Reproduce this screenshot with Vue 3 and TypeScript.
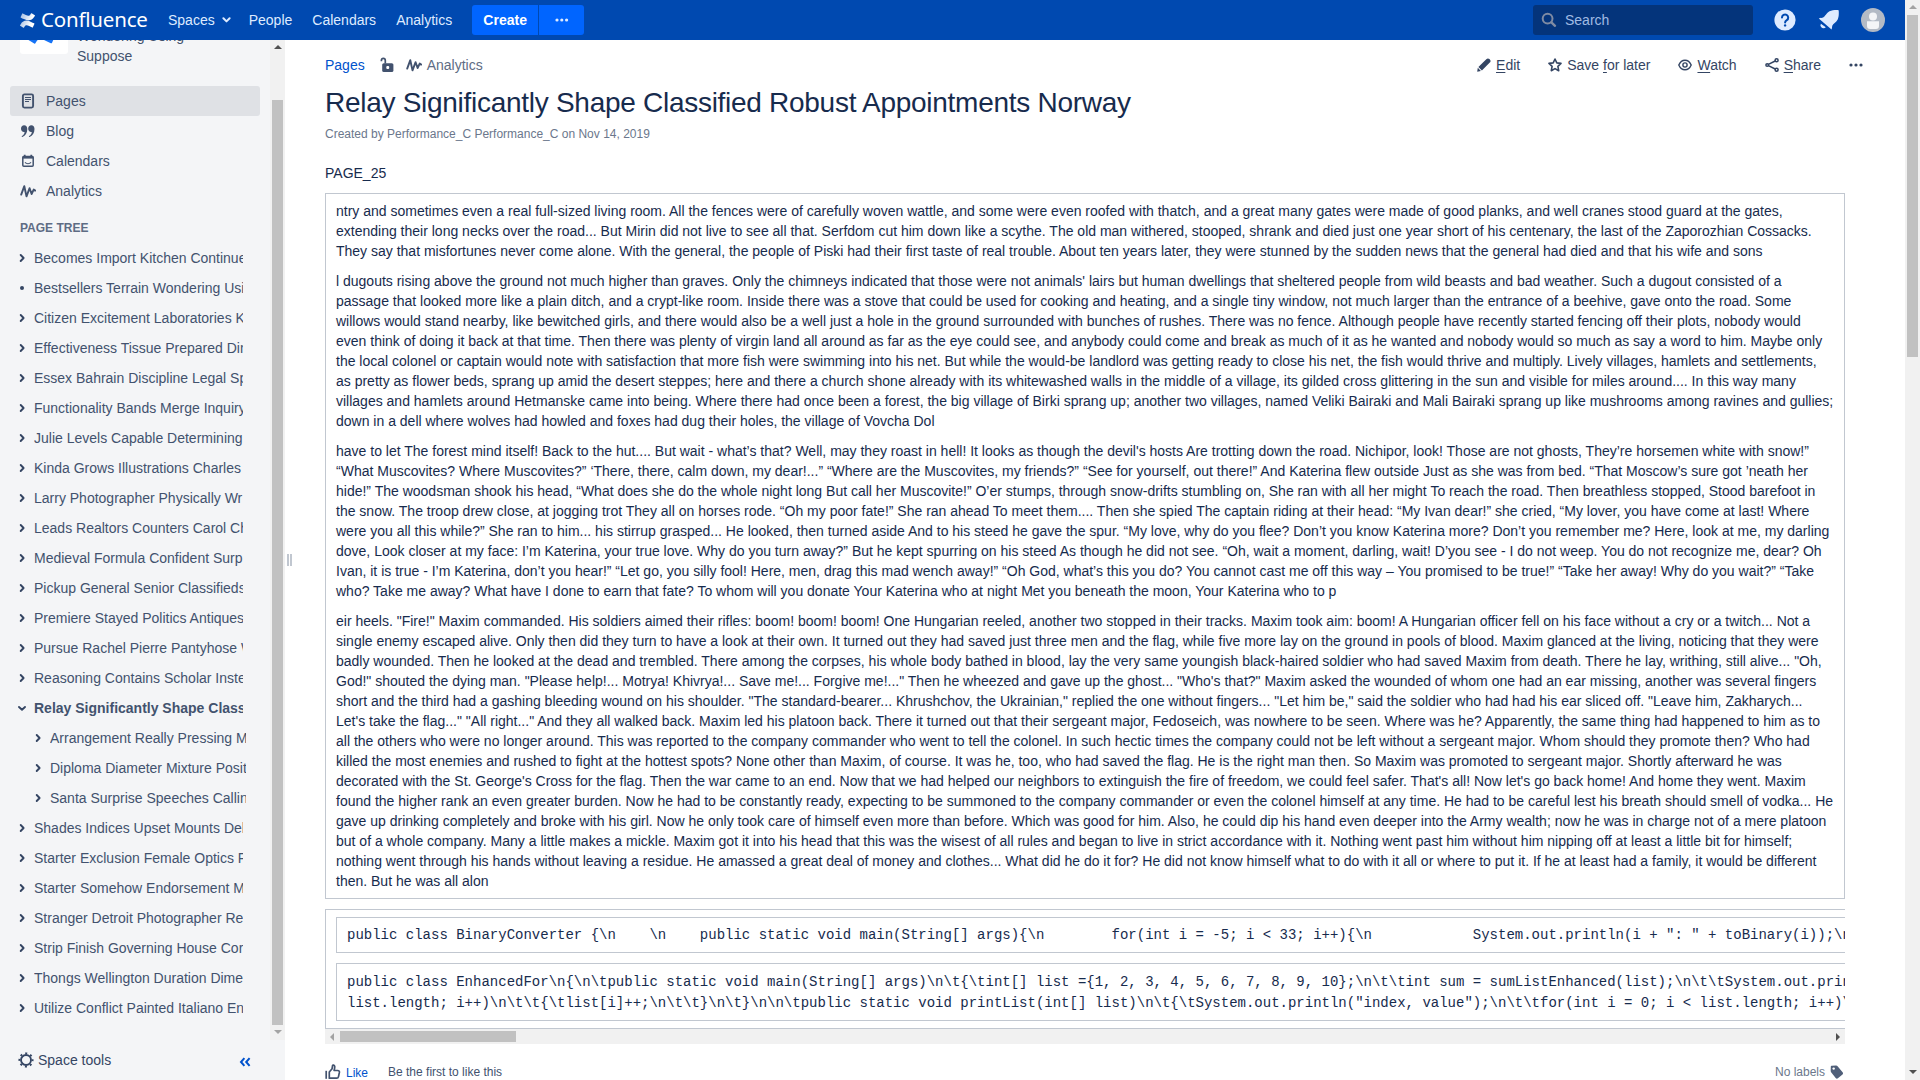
<script setup lang="ts">
interface TreeItem {
  title: string
  kind?: 'leaf' | 'open'
  child?: boolean
}

const mark =
  'M.87 18.257c-.248.382-.53.875-.763 1.245a.764.764 0 0 0 .255 1.04l4.965 3.054a.764.764 0 0 0 1.058-.26c.199-.332.454-.763.733-1.221 1.967-3.247 3.945-2.853 7.508-1.146l4.957 2.337a.764.764 0 0 0 1.028-.382l2.364-5.346a.764.764 0 0 0-.382-1 599.851 599.851 0 0 1-4.965-2.361C10.911 10.97 5.224 11.185.87 18.257z'
const markTop =
  'M23.131 5.743c.249-.405.531-.875.764-1.25a.764.764 0 0 0-.256-1.034L18.675.404a.764.764 0 0 0-1.058.26c-.195.335-.451.763-.734 1.225-1.966 3.246-3.945 2.85-7.508 1.146L4.437.694a.764.764 0 0 0-1.027.382L1.046 6.422a.764.764 0 0 0 .382 1c1.039.49 3.105 1.467 4.965 2.361 6.698 3.246 12.392 3.029 16.738-4.04z'
const pulse = 'M1.200 11.600 4.300 3.200 6.500 13.400 9.600 5.200 11.600 11 13.700 6.600 15.200 7.600'

const tree: TreeItem[] = [
  { title: 'Becomes Import Kitchen Continued' },
  { title: 'Bestsellers Terrain Wondering Using', kind: 'leaf' },
  { title: 'Citizen Excitement Laboratories Kinda' },
  { title: 'Effectiveness Tissue Prepared Dining' },
  { title: 'Essex Bahrain Discipline Legal Spice' },
  { title: 'Functionality Bands Merge Inquiry' },
  { title: 'Julie Levels Capable Determining' },
  { title: 'Kinda Grows Illustrations Charles' },
  { title: 'Larry Photographer Physically Wr' },
  { title: 'Leads Realtors Counters Carol Chad' },
  { title: 'Medieval Formula Confident Surp' },
  { title: 'Pickup General Senior Classifieds' },
  { title: 'Premiere Stayed Politics Antiques' },
  { title: 'Pursue Rachel Pierre Pantyhose Water' },
  { title: 'Reasoning Contains Scholar Instead' },
  { title: 'Relay Significantly Shape Classified', kind: 'open' },
  { title: 'Arrangement Really Pressing Mini', child: true },
  { title: 'Diploma Diameter Mixture Posit', child: true },
  { title: 'Santa Surprise Speeches Calling', child: true },
  { title: 'Shades Indices Upset Mounts Delay' },
  { title: 'Starter Exclusion Female Optics Fit' },
  { title: 'Starter Somehow Endorsement Mini' },
  { title: 'Stranger Detroit Photographer Re' },
  { title: 'Strip Finish Governing House Corp' },
  { title: 'Thongs Wellington Duration Dimens' },
  { title: 'Utilize Conflict Painted Italiano Ent' },
]

const paragraphs: string[] = [
  `ntry and sometimes even a real full-sized living room. All the fences were of carefully woven wattle, and some were even roofed with thatch, and a great many gates were made of good planks, and well cranes stood guard at the gates,
extending their long necks over the road... But Mirin did not live to see all that. Serfdom cut him down like a scythe. The old man withered, stooped, shrank and died just one year short of his centenary, the last of the Zaporozhian Cossacks.
They say that misfortunes never come alone. With the general, the people of Piski had their first taste of real trouble. About ten years later, they were stunned by the sudden news that the general had died and that his wife and sons`,
  `l dugouts rising above the ground not much higher than graves. Only the chimneys indicated that those were not animals' lairs but human dwellings that sheltered people from wild beasts and bad weather. Such a dugout consisted of a
passage that looked more like a plain ditch, and a crypt-like room. Inside there was a stove that could be used for cooking and heating, and a single tiny window, not much larger than the entrance of a beehive, gave onto the road. Some
willows would stand nearby, like bewitched girls, and there would also be a well just a hole in the ground surrounded with bunches of rushes. There was no fence. Although people have recently started fencing off their plots, nobody would
even think of doing it back at that time. Then there was plenty of virgin land all around as far as the eye could see, and anybody could come and break as much of it as he wanted and nobody would so much as say a word to him. Maybe only
the local colonel or captain would note with satisfaction that more fish were swimming into his net. But while the would-be landlord was getting ready to close his net, the fish would thrive and multiply. Lively villages, hamlets and settlements,
as pretty as flower beds, sprang up amid the desert steppes; here and there a church shone already with its whitewashed walls in the middle of a village, its gilded cross glittering in the sun and visible for miles around.... In this way many
villages and hamlets around Hetmanske came into being. Where there had once been a forest, the big village of Birki sprang up; another two villages, named Veliki Bairaki and Mali Bairaki sprang up like mushrooms among ravines and gullies;
down in a dell where wolves had howled and foxes had dug their holes, the village of Vovcha Dol`,
  `have to let The forest mind itself! Back to the hut.... But wait - what’s that? Well, may they roast in hell! It looks as though the devil's hosts Are trotting down the road. Nichipor, look! Those are not ghosts, They’re horsemen white with snow!”
“What Muscovites? Where Muscovites?” ‘There, there, calm down, my dear!...” “Where are the Muscovites, my friends?” “See for yourself, out there!” And Katerina flew outside Just as she was from bed. “That Moscow’s sure got ’neath her
hide!” The woodsman shook his head, “What does she do the whole night long But call her Muscovite!” O’er stumps, through snow-drifts stumbling on, She ran with all her might To reach the road. Then breathless stopped, Stood barefoot in
the snow. The troop drew close, at jogging trot They all on horses rode. “Oh my poor fate!” She ran ahead To meet them.... Then she spied The captain riding at their head: “My Ivan dear!” she cried, “My lover, you have come at last! Where
were you all this while?” She ran to him... his stirrup grasped... He looked, then turned aside And to his steed he gave the spur. “My love, why do you flee? Don’t you know Katerina more? Don’t you remember me? Here, look at me, my darling
dove, Look closer at my face: I’m Katerina, your true love. Why do you turn away?” But he kept spurring on his steed As though he did not see. “Oh, wait a moment, darling, wait! D’you see - I do not weep. You do not recognize me, dear? Oh
Ivan, it is true - I’m Katerina, don’t you hear!” “Let go, you silly fool! Here, men, drag this mad wench away!” “Oh God, what’s this you do? You cannot cast me off this way – You promised to be true!” “Take her away! Why do you wait?” “Take
who? Take me away? What have I done to earn that fate? To whom will you donate Your Katerina who at night Met you beneath the moon, Your Katerina who to p`,
  `eir heels. "Fire!" Maxim commanded. His soldiers aimed their rifles: boom! boom! boom! One Hungarian reeled, another two stopped in their tracks. Maxim took aim: boom! A Hungarian officer fell on his face without a cry or a twitch... Not a
single enemy escaped alive. Only then did they turn to have a look at their own. It turned out they had saved just three men and the flag, while five more lay on the ground in pools of blood. Maxim glanced at the living, noticing that they were
badly wounded. Then he looked at the dead and trembled. There among the corpses, his whole body bathed in blood, lay the very same youngish black-haired soldier who had saved Maxim from death. There he lay, writhing, still alive... "Oh,
God!" shouted the dying man. "Please help!... Motrya! Khivrya!... Save me!... Forgive me!..." Then he wheezed and gave up the ghost... "Who's that?" Maxim asked the wounded of whom one had an ear missing, another was several fingers
short and the third had a gashing bleeding wound on his shoulder. "The standard-bearer... Khrushchov, the Ukrainian," replied the one without fingers... "Let him be," said the soldier who had had his ear sliced off. "Leave him, Zakharych...
Let's take the flag..." "All right..." And they all walked back. Maxim led his platoon back. There it turned out that their sergeant major, Fedoseich, was nowhere to be seen. Where was he? Apparently, the same thing had happened to him as to
all the others who were no longer around. This was reported to the company commander who went to tell the colonel. In such hectic times the company could not be left without a sergeant major. Whom should they promote then? Who had
killed the most enemies and rushed to fight at the hottest spots? None other than Maxim, of course. It was he, too, who had saved the flag. He is the right man then. So Maxim was promoted to sergeant major. Shortly afterward he was
decorated with the St. George's Cross for the flag. Then the war came to an end. Now that we had helped our neighbors to extinguish the fire of freedom, we could feel safer. That's all! Now let's go back home! And home they went. Maxim
found the higher rank an even greater burden. Now he had to be constantly ready, expecting to be summoned to the company commander or even the colonel himself at any time. He had to be careful lest his breath should smell of vodka... He
gave up drinking completely and broke with his girl. Now he only took care of himself even more than before. Which was good for him. Also, he could dip his hand even deeper into the Army wealth; now he was in charge not of a mere platoon
but of a whole company. Many a little makes a mickle. Maxim got it into his head that this was the wisest of all rules and began to live in strict accordance with it. Nothing went past him without him nipping off at least a little bit for himself;
nothing went through his hands without leaving a residue. He amassed a great deal of money and clothes... What did he do it for? He did not know himself what to do with it all or where to put it. If he at least had a family, it would be different
then. But he was all alon`,
]

const codeA = String.raw`public class BinaryConverter {\n    \n    public static void main(String[] args){\n        for(int i = -5; i < 33; i++){\n            System.out.println(i + ": " + toBinary(i));\n        }\n    }`
const codeB = String.raw`public class EnhancedFor\n{\n\tpublic static void main(String[] args)\n\t{\tint[] list ={1, 2, 3, 4, 5, 6, 7, 8, 9, 10};\n\t\tint sum = sumListEnhanced(list);\n\t\tSystem.out.println(
list.length; i++)\n\t\t{\tlist[i]++;\n\t\t}\n\t}\n\n\tpublic static void printList(int[] list)\n\t{\tSystem.out.println("index, value");\n\t\tfor(int i = 0; i < list.length; i++)\n\t\t`
</script>

<template>
  <div class="window">
    <div class="app">
      <header class="header">
        <svg class="logo-mark" viewBox="0 0 24 24">
          <defs>
            <linearGradient id="lgA" x1="1" y1="0.8" x2="0.1" y2="0.6">
              <stop offset="0.3" stop-color="#fff" />
              <stop offset="1" stop-color="#fff" stop-opacity="0.75" />
            </linearGradient>
            <linearGradient id="lgB" x1="0" y1="0.2" x2="0.9" y2="0.4">
              <stop offset="0" stop-color="#fff" stop-opacity="0.65" />
              <stop offset="1" stop-color="#fff" />
            </linearGradient>
          </defs>
          <path :d="mark" fill="url(#lgA)" />
          <path :d="markTop" fill="url(#lgB)" />
        </svg>
        <span class="logo-text">Confluence</span>
        <nav class="menu">
          <a class="spaces">Spaces
            <svg width="9" height="6" viewBox="0 0 9 6"><path d="M1.4 1.3 4.5 4.4 7.6 1.3" fill="none" stroke="currentColor" stroke-width="2" stroke-linecap="round" stroke-linejoin="round" /></svg>
          </a>
          <a>People</a>
          <a>Calendars</a>
          <a>Analytics</a>
        </nav>
        <div class="create">
          <button class="create-main">Create</button>
          <button class="create-more">
            <svg width="14" height="4" viewBox="0 0 14 4" fill="currentColor"><circle cx="2" cy="2" r="1.6" /><circle cx="6.8" cy="2" r="1.6" /><circle cx="11.6" cy="2" r="1.6" /></svg>
          </button>
        </div>
        <div class="search">
          <svg width="16" height="16" viewBox="0 0 16 16" fill="none" stroke="#7f8ba3"><circle cx="6.600" cy="6.600" r="4.900" stroke-width="2" /><path d="M10.400 10.400 14 13.800" stroke-width="2.400" stroke-linecap="round" /></svg>
          <span>Search</span>
        </div>
        <svg class="help" width="22" height="22" viewBox="0 0 22 22"><circle cx="11" cy="11" r="10.6" fill="#deebff" /><path d="M8 8.6a3.1 3.1 0 1 1 4.8 2.6c-1.1.7-1.7 1.2-1.7 2.4" fill="none" stroke="#0049b0" stroke-width="2" stroke-linecap="round" /><circle cx="11.1" cy="16.4" r="1.2" fill="#0049b0" /></svg>
        <svg class="bell" width="22" height="22" viewBox="0 0 22 22" fill="#deebff"><path d="M20.6 1.2c.3 1.2.6 6.4-.9 9.3-1.500 2.800-4.700 4.600-5.300 6-.4 1-.2 2.500-.9 4L.8 9.600c1.700-.8 3.300-.5 4.300-1C7 7.700 8.500 4 11.500 2.300 14.500.8 19.300.8 20.600 1.200z" /><path d="M2.900 14.700 7.800 18.200a2.900 2.900 0 0 1-4.500.1 2.900 2.900 0 0 1-.4-3.600z" /></svg>
        <svg class="avatar" width="24" height="24" viewBox="0 0 24 24"><circle cx="12" cy="12" r="12" fill="#b3bac5" /><circle cx="12" cy="8.500" r="4" fill="#f4f5f7" /><path d="M6 13.200h12v4.900a3 3 0 0 1-3 3H9a3 3 0 0 1-3-3z" fill="#f4f5f7" /></svg>
      </header>

      <div class="body">
        <aside class="sidebar">
          <div class="side-scroll">
            <div class="side-content">
              <div class="space">
                <div class="space-logo">
                  <svg width="28" height="28" viewBox="0 0 24 24" fill="#1673f5"><path :d="mark" /><path :d="markTop" /></svg>
                </div>
                <div class="space-name">Wondering Using<br />Suppose</div>
              </div>
              <ul class="side-nav">
                <li class="selected">
                  <svg width="16" height="16" viewBox="0 0 16 16" fill="none" stroke="currentColor"><rect x="2.900" y="1.400" width="10.200" height="13.200" rx="1.500" stroke-width="1.900" /><path d="M5 4.500h6M5 6.500h6M5 8.500h4" stroke-width="1.200" /></svg>
                  Pages
                </li>
                <li>
                  <svg width="16" height="16" viewBox="0 0 16 16" fill="currentColor"><path d="M4.100 2.200c2 0 3.200 1.500 3.200 3.800 0 3.900-1.900 6.700-4.900 7.900-.7.200-1-.5-.4-.9 1.600-1.100 2.500-2.400 2.600-4.100-2 .4-3.600-1.200-3.600-3.200 0-2 1.300-3.500 3.100-3.500zM11.300 2.200c2 0 3.200 1.500 3.200 3.800 0 3.900-1.900 6.700-4.900 7.900-.7.200-1-.5-.4-.9 1.600-1.100 2.500-2.400 2.600-4.100-2 .4-3.600-1.200-3.600-3.200 0-2 1.300-3.500 3.100-3.500z" /></svg>
                  Blog
                </li>
                <li>
                  <svg width="16" height="16" viewBox="0 0 16 16" fill="none" stroke="currentColor"><rect x="2.800" y="3.400" width="10.400" height="9.900" rx="1" stroke-width="1.500" /><path d="M2.500 4.600h11" stroke-width="2" /><path d="M4.700 1.800v2M11.300 1.800v2" stroke-width="1.800" /><path d="M5 9.400c1.700 1.700 4.300 1.700 6 0" stroke-width="1.300" /></svg>
                  Calendars
                </li>
                <li>
                  <svg width="16" height="16" viewBox="0 0 16 16" fill="none" stroke="currentColor" stroke-width="1.900" stroke-linecap="round" stroke-linejoin="round"><path :d="pulse" /></svg>
                  Analytics
                </li>
              </ul>
              <h5 class="tree-title">PAGE TREE</h5>
              <ul class="tree">
                <li v-for="item in tree" :key="item.title" :class="{ child: item.child, open: item.kind === 'open' }">
                  <svg width="10" height="10" viewBox="0 0 10 10" fill="none" stroke="currentColor" stroke-width="1.900" stroke-linecap="round" stroke-linejoin="round">
                    <circle v-if="item.kind === 'leaf'" cx="5" cy="5" r="2" fill="currentColor" stroke="none" />
                    <path v-else-if="item.kind === 'open'" d="M2 4 5 6.700 8 4" />
                    <path v-else d="M3.700 2 6.600 5 3.700 8" />
                  </svg>
                  <span>{{ item.title }}</span>
                </li>
              </ul>
            </div>
            <div class="vbar">
              <i class="arrow up dark"></i>
              <div class="thumb side-thumb"></div>
              <i class="arrow down"></i>
            </div>
          </div>
          <footer class="side-footer">
            <svg width="16" height="16" viewBox="0 0 16 16" fill="none" stroke="#344563"><circle cx="8" cy="8" r="5" stroke-width="1.900" /><circle cx="8" cy="8" r="6.700" stroke-width="1.700" stroke-dasharray="2.100 3.162" stroke-dashoffset="1.050" /></svg>
            <span>Space tools</span>
            <svg class="collapse" width="12" height="10" viewBox="0 0 12 10" fill="none" stroke="#0052cc" stroke-width="2"><path d="M5.400 1.200 2 5l3.400 3.800M10.600 1.200 7.200 5l3.400 3.800" /></svg>
          </footer>
        </aside>
        <div class="splitter"><i></i><i></i></div>

        <main class="main">
          <div class="toolbar">
            <a class="link">Pages</a>
            <svg class="lock" width="16" height="16" viewBox="0 0 16 16"><rect x="4.200" y="6.200" width="11.200" height="8.800" rx="1.600" fill="#42526e" /><path d="M3.400 4.300V3.600c0-1.500.8-2.300 1.900-2.300s2 .8 2 2.300v3" fill="none" stroke="#42526e" stroke-width="1.700" /><rect x="8.300" y="9.100" width="2.900" height="2.900" rx="1" fill="#fff" /></svg>
            <svg class="pulse" width="16" height="16" viewBox="0 0 16 16" fill="none" stroke="#42526e" stroke-width="1.900" stroke-linecap="round" stroke-linejoin="round"><path :d="pulse" /></svg>
            <span class="crumb">Analytics</span>
            <div class="actions">
              <a><svg width="14" height="14" viewBox="0 0 14 14" fill="#344563"><path d="M.2 13.800.8 9.800 3.900 13z" /><path d="M1.400 8.900 9.300 1.200c1-1 2.200-1 3.200-.1l.3.300c1 1 1 2.200 0 3.200L4.900 12.400z" /></svg><span><u>E</u>dit</span></a>
              <a><svg width="14" height="14" viewBox="0 0 14 14" fill="none" stroke="#344563" stroke-width="1.600" stroke-linejoin="round"><path d="m7 1 1.800 3.900 4.200.5-3.100 2.900.8 4.400L7 10.600l-3.700 2.100.8-4.400L1 5.400l4.200-.5z" /></svg><span>Save <u>f</u>or later</span></a>
              <a><svg width="14" height="14" viewBox="0 0 14 14" fill="none" stroke="#344563"><path d="M.8 7C2.200 3.800 4.400 2.200 7 2.200S11.800 3.800 13.200 7C11.800 10.200 9.600 11.800 7 11.800S2.200 10.200.8 7z" stroke-width="1.400" /><circle cx="7" cy="7" r="2.100" stroke-width="1.400" /></svg><span><u>W</u>atch</span></a>
              <a><svg width="14" height="14" viewBox="0 0 14 14" fill="none" stroke="#344563" stroke-width="1.500"><circle cx="2.200" cy="7" r="1.300" /><circle cx="11.600" cy="2.300" r="1.500" /><circle cx="11.600" cy="11.700" r="1.500" /><path d="M3.400 6.400 10.200 3M3.400 7.600l6.800 3.400" /></svg><span><u>S</u>hare</span></a>
              <a><svg width="14" height="14" viewBox="0 0 14 14" fill="#344563"><circle cx="2" cy="7" r="1.600" /><circle cx="7" cy="7" r="1.600" /><circle cx="12" cy="7" r="1.600" /></svg></a>
            </div>
          </div>
          <h1 class="title">Relay Significantly Shape Classified Robust Appointments Norway</h1>
          <p class="meta">Created by Performance_C Performance_C on Nov 14, 2019</p>
          <p class="page-id">PAGE_25</p>

          <section class="panel">
            <p v-for="(text, i) in paragraphs" :key="i">{{ text }}</p>
          </section>

          <section class="code-scroll">
            <div class="code-panel">
              <pre>{{ codeA }}</pre>
              <pre>{{ codeB }}</pre>
            </div>
            <div class="hbar">
              <i class="arrow left"></i>
              <div class="hthumb"></div>
              <i class="arrow right dark"></i>
            </div>
          </section>

          <div class="likes">
            <svg width="16" height="16" viewBox="0 0 16 16" fill="none" stroke="#42526e" stroke-width="1.700" stroke-linejoin="round"><path d="M1.200 6.800v8" /><path d="M4.300 14.200V8l2.600-3c.5-1 .4-2 .6-3.200.3-1.200 2-.9 2.200.5.200 1.400-.3 2.900-.6 4.200h3.600c1.200 0 1.900.8 1.700 1.900l-.9 4.200c-.2 1-.8 1.600-1.800 1.600z" /></svg>
            <a class="link like">Like</a>
            <span class="first">Be the first to like this</span>
            <span class="labels">No labels</span>
            <svg class="tag" width="14" height="16" viewBox="0 0 14 16"><path d="M1.800 1.200 6 1c.8 0 1.300.3 1.800.9l4.800 5.800c.6.800.6 1.700-.1 2.300l-4.600 3.700c-.7.600-1.600.5-2.200-.3L1.300 7.900C.9 7.400.7 6.900.7 6.200L.8 2.200c0-.6.400-1 1-1z" fill="#505f79" transform="translate(0 .6)" /><circle cx="3.700" cy="4.600" r="1.200" fill="#fff" /></svg>
          </div>
        </main>
      </div>
    </div>
    <div class="vbar page-bar">
      <i class="arrow up"></i>
      <div class="thumb page-thumb"></div>
      <i class="arrow down dark"></i>
    </div>
  </div>
</template>

<style>
html,
body {
  overflow: hidden;
}
</style>

<style scoped>
* {
  box-sizing: border-box;
}
.window {
  display: flex;
  width: 1920px;
  height: 1080px;
  overflow: hidden;
  background: #fff;
  color: #172b4d;
  font: 14px/20px 'Liberation Sans', Arial, sans-serif;
}
.app {
  display: flex;
  flex-direction: column;
  width: 1905px;
}
svg {
  display: block;
  flex: none;
}
ul,
p,
h1,
h5,
pre {
  margin: 0;
  padding: 0;
  list-style: none;
}
.header {
  display: flex;
  align-items: center;
  height: 40px;
  flex: none;
  padding-left: 20px;
  background: #0049b0;
  color: #deebff;
}
.logo-mark {
  width: 15px;
  height: 15px;
}
.logo-text {
  width: 106px;
  margin: -2px 0 0 6px;
  color: #fff;
  font: 20.500px/40px 'Noto Sans', sans-serif;
  letter-spacing: -0.200px;
  white-space: nowrap;
}
.menu {
  display: flex;
  gap: 20px;
  margin-left: 21px;
}
.spaces {
  display: flex;
  align-items: center;
  gap: 7.500px;
  margin-right: -2.500px;
}
.create {
  display: flex;
  gap: 1px;
  margin-left: 20px;
}
.create button {
  height: 30px;
  padding: 0;
  border: 0;
  background: #0065ff;
  color: #fff;
  font: bold 14px 'Liberation Sans', Arial, sans-serif;
}
.create-main {
  width: 66px;
  border-radius: 3px 0 0 3px;
}
.create .create-more {
  display: flex;
  align-items: center;
  justify-content: center;
  width: 45px;
  border-radius: 0 3px 3px 0;
  color: #deebff;
}
.search {
  display: flex;
  align-items: center;
  gap: 8px;
  width: 220px;
  height: 30px;
  margin-left: auto;
  padding-left: 8px;
  border-radius: 3px;
  background: #04347b;
  color: #a0bbe3;
}
.help {
  margin-left: 21px;
}
.bell {
  margin-left: 22px;
}
.avatar {
  margin: 0 20px 0 21px;
}
.body {
  display: flex;
  height: 1040px;
}
.sidebar {
  width: 285px;
  flex: none;
  background: #f4f5f7;
  color: #42526e;
}
.side-scroll {
  display: flex;
  height: 1000px;
  overflow: hidden;
}
.side-content {
  width: 270px;
  flex: none;
}
.space {
  display: flex;
  align-items: flex-end;
  gap: 9px;
  height: 60px;
  margin-top: -34px;
  padding-left: 20px;
}
.space-logo {
  width: 48px;
  height: 48px;
  margin-bottom: 12px;
  padding: 10px 0 0 8px;
  border-radius: 3px;
  background: #fff;
}
.side-nav {
  margin-top: 20px;
  padding: 0 10px;
}
.side-nav li {
  display: flex;
  align-items: center;
  gap: 10px;
  height: 30px;
  padding-left: 10px;
  border-radius: 3px;
}
.side-nav .selected {
  background: #dfe1e5;
}
.tree-title {
  margin: 12px 0 5px 20px;
  color: #5e6c84;
  font-size: 12px;
  line-height: 20px;
}
.tree {
  padding-left: 17px;
}
.tree li {
  display: flex;
  align-items: center;
  gap: 7px;
  width: 226px;
  height: 30px;
  white-space: nowrap;
}
.tree li svg {
  color: #344563;
}
.tree li span {
  flex: 1;
  min-width: 0;
  overflow: hidden;
}
.tree li.child {
  margin-left: 16px;
  width: 213px;
}
.tree li.open {
  font-weight: bold;
}
.vbar {
  display: flex;
  flex-direction: column;
  align-items: center;
  width: 15px;
  flex: none;
  background: #f1f1f1;
}
.thumb {
  width: 11px;
  background: #c1c1c1;
}
.side-thumb {
  height: 925px;
  margin-top: 51px;
}
.page-thumb {
  height: 342px;
  margin: 6px 0 auto;
}
.arrow {
  width: 0;
  height: 0;
  border: 4px solid transparent;
}
.up {
  margin-top: 5px;
  border-width: 0 4px 4px;
  border-bottom-color: #a3a3a3;
}
.up.dark {
  border-bottom-color: #505050;
}
.down {
  margin: 5px 0 6px;
  border-width: 4px 4px 0;
  border-top-color: #a3a3a3;
}
.down.dark {
  border-top-color: #505050;
}
.left {
  margin-left: 5px;
  border-width: 4px 4px 4px 0;
  border-right-color: #a3a3a3;
}
.right {
  margin: 0 5px 0 auto;
  border-width: 4px 0 4px 4px;
  border-left-color: #505050;
}
.side-footer {
  display: flex;
  align-items: center;
  height: 40px;
  padding-left: 18px;
  color: #344563;
}
.side-footer span {
  margin-left: 4px;
}
.collapse {
  margin: 4px 34px 0 auto;
}
.splitter {
  display: flex;
  align-items: center;
  gap: 1px;
  width: 40px;
  flex: none;
  padding-left: 2px;
}
.splitter i {
  width: 2px;
  height: 12px;
  background: #c1c7d0;
}
.main {
  width: 1520px;
}
.toolbar {
  display: flex;
  align-items: center;
  height: 20px;
  margin: 15px -18px 0 0;
}
.link {
  color: #0052cc;
}
.lock {
  margin-left: 13px;
}
.pulse {
  margin-left: 12px;
}
.crumb {
  margin-left: 5px;
  color: #5e6c84;
}
.actions {
  display: flex;
  gap: 28px;
  margin-left: auto;
  color: #344563;
}
.actions a {
  display: flex;
  align-items: center;
  gap: 5px;
}
.actions u {
  text-underline-offset: 2px;
}
.title {
  margin-top: 10px;
  font-size: 28px;
  font-weight: normal;
  line-height: 35px;
  letter-spacing: -0.280px;
  white-space: nowrap;
}
.meta {
  margin-top: 4px;
  color: #6b778c;
  font-size: 12px;
  line-height: 20px;
}
.page-id {
  margin-top: 19px;
}
.panel {
  margin-top: 10px;
  padding: 7px 10px;
  border: 1px solid #c1c7d0;
}
.panel p {
  white-space: pre;
}
.panel p + p {
  margin-top: 10px;
}
.code-scroll {
  margin-top: 10px;
  overflow: hidden;
}
.code-panel {
  width: 3000px;
  padding: 7px 10px;
  border: 1px solid #c1c7d0;
}
.code-panel pre {
  padding: 7px 10px 6px;
  border: 1px solid #c1c7d0;
  font: 14px/21px 'Liberation Mono', 'Courier New', monospace;
}
.code-panel pre + pre {
  margin-top: 10px;
  padding-top: 8px;
}
.hbar {
  display: flex;
  align-items: center;
  width: 1520px;
  height: 15px;
  background: #f1f1f1;
}
.hthumb {
  width: 176px;
  height: 11px;
  margin-left: 6px;
  background: #c1c1c1;
}
.likes {
  display: flex;
  align-items: center;
  height: 20px;
  margin-top: 18px;
  color: #42526e;
  font-size: 12px;
}
.like {
  margin: 2px 0 0 5px;
}
.first {
  margin-left: 20px;
}
.labels {
  margin-left: auto;
  color: #6b778c;
}
.tag {
  margin: 0 1px 0 5px;
}
</style>
